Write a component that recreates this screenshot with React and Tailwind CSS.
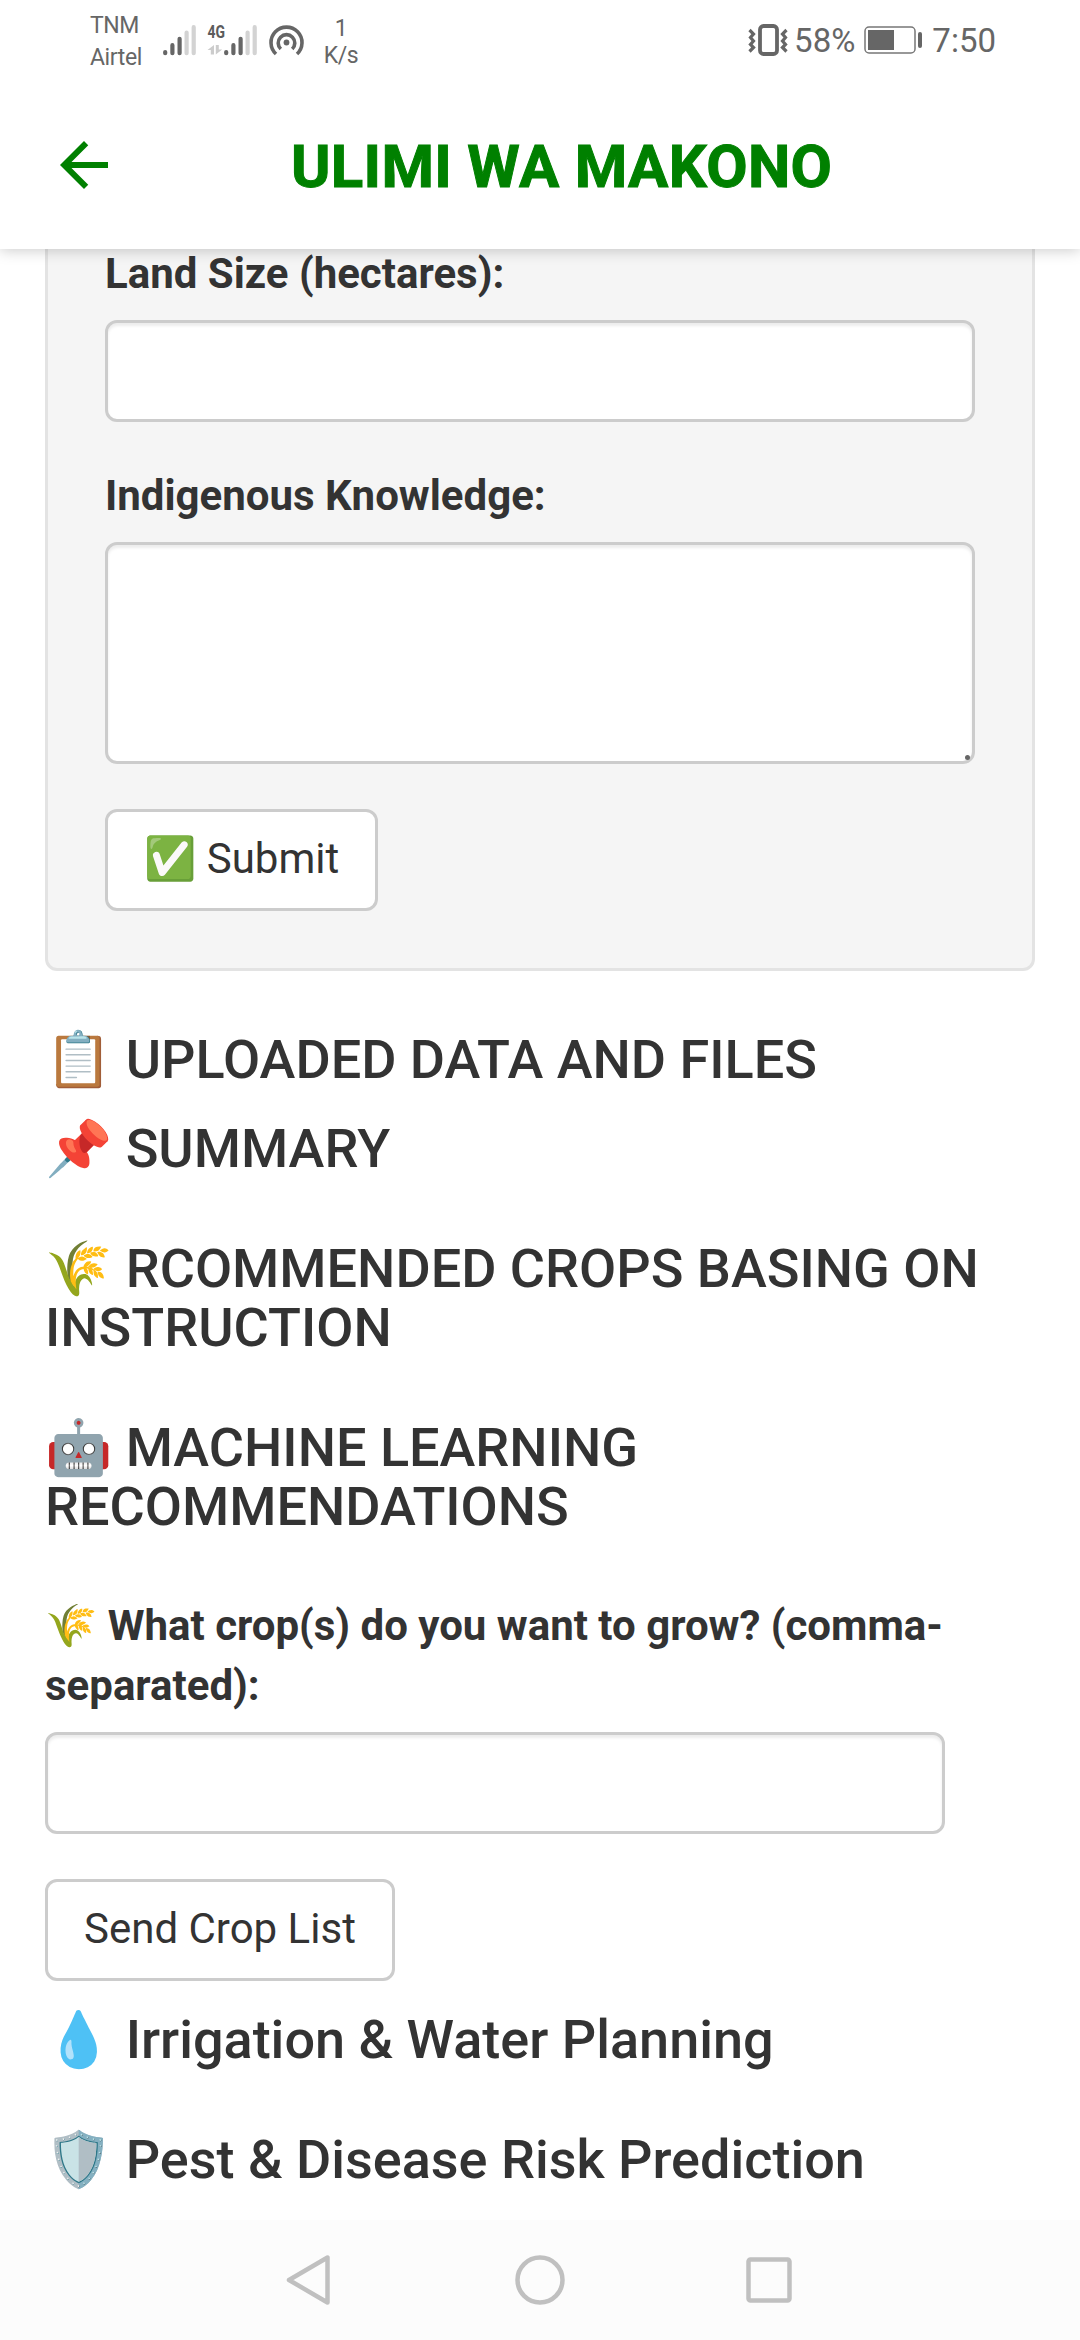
function SignalBars() {
  return (
    <svg width="33" height="31" viewBox="0 0 33 31" className="shrink-0">
      <g strokeWidth="4.2" strokeLinecap="round" fill="none">
        <path stroke="#666" d="M2.2 27v1.2M9.4 20.2v8M16.6 13.8v14.4" />
        <path stroke="#d3d3d3" d="M23.6 7.500v20.700M30.700 2.200v26" />
      </g>
    </svg>
  );
}

function StatusBar() {
  return (
    <div className="flex h-[83px] shrink-0 items-start justify-between pl-[90px] pr-[84px] text-[#666]">
      <div className="flex">
        <div className="w-[73px] pt-[10px] text-[23px] leading-[32px] tracking-[-0.4px]">
          <div>TNM</div>
          <div>Airtel</div>
        </div>
        <div className="pt-[25px]">
          <SignalBars />
        </div>
        <svg width="34" height="40" viewBox="0 0 34 40" className="-mr-[6px] mt-[20px]">
          <text x="11.500" y="18.300" fontSize="18.500" fontWeight="700" fill="#5c5c5c" textLength="17.500" lengthAdjust="spacingAndGlyphs">4G</text>
          <g fill="#ccc">
            <path d="M18 25v9.500h-3.200v-4.500h-3.300z" />
            <path d="M19.800 25h3v4.500h3.400l-6.400 5z" />
          </g>
        </svg>
        <div className="pt-[25px]">
          <SignalBars />
        </div>
        <svg width="36" height="32" viewBox="0 0 36 32" className="ml-[12px] mt-[25px]" fill="none" stroke="#666" strokeWidth="3.600">
          <path d="M7 29A15.500 15.500 0 1 1 28 29" />
          <path d="M11.800 24A8.300 8.300 0 1 1 23.200 24" />
          <circle cx="17.500" cy="17.500" r="2.900" fill="#666" stroke="none" />
        </svg>
        <div className="ml-[17px] w-[38px] pt-[15px] text-center text-[23px] leading-[27px] tracking-[-0.4px]">
          <div>1</div>
          <div>K/s</div>
        </div>
      </div>
      <div className="flex h-[80px] items-center text-[33px] leading-[40px]">
        <svg width="40" height="32" viewBox="0 0 40 32" fill="none" stroke="#666">
          <rect x="12" y="2" width="17" height="28" rx="3.500" strokeWidth="3.800" />
          <path strokeWidth="3.200" d="M1.500 6l4 4-3 3.500 3 3.500-3 3.500 3 3-4 4M38.500 6l-4 4 3 3.500-3 3.500 3 3.500-3 3 4 4" />
        </svg>
        <span className="ml-[6px] pt-[2px]">58%</span>
        <svg width="60" height="30" viewBox="0 0 60 30" className="ml-[9px]">
          <rect x="1" y="2" width="50" height="26" rx="4" fill="none" stroke="#777" strokeWidth="1.500" />
          <rect x="4" y="5" width="26" height="20" fill="#666" />
          <rect x="54" y="7" width="4" height="16" rx="2" fill="#666" />
        </svg>
        <span className="ml-[8px] pt-[2px]">7:50</span>
      </div>
    </div>
  );
}

function Header() {
  return (
    <header className="relative z-10 flex h-[249px] shrink-0 flex-col bg-white shadow-[0_1px_14px_rgba(0,0,0,0.22)]">
      <StatusBar />
      <div className="flex h-[164px] items-center pl-[48px]">
        <svg width="72" height="72" viewBox="0 0 24 24" fill="#008000">
          <path d="M20 11H7.830l5.590-5.590L12 4l-8 8 8 8 1.410-1.410L7.830 13H20v-2z" />
        </svg>
        <h1 className="ml-[171px] whitespace-nowrap pt-[4px] text-[60px] font-bold leading-[72px] tracking-[0.3px] text-[#008000] [-webkit-text-stroke:1px_#008000]">ULIMI WA MAKONO</h1>
      </div>
    </header>
  );
}

const control =
  "block w-full rounded-[12px] border-[3px] border-[#ccc] bg-white px-[36px] py-[18px] shadow-[inset_0_3px_3px_rgba(0,0,0,0.075)] outline-none";
const button =
  "block h-[102px] rounded-[12px] border-[3px] border-[#ccc] bg-white px-[36px] text-[42px] leading-[60px] whitespace-nowrap";

function Heading({ icon, children }) {
  return (
    <h4 className="text-[54px] font-medium leading-[59.4px]">
      {icon} {children}
    </h4>
  );
}

function NavBar() {
  return (
    <nav className="relative z-10 flex h-[120px] shrink-0 items-center justify-center gap-[179px] bg-[#fcfcfc]">
      <svg width="50" height="60" viewBox="0 0 50 60" fill="none" stroke="#c0c0c0" strokeWidth="4.500" strokeLinejoin="round">
        <path d="M41.500 7.500v45L3 30z" />
      </svg>
      <svg width="50" height="50" viewBox="0 0 50 50" fill="none" stroke="#c0c0c0" strokeWidth="4.500">
        <circle cx="25" cy="25" r="22.500" />
      </svg>
      <svg width="50" height="50" viewBox="0 0 50 50" fill="none" stroke="#c0c0c0" strokeWidth="4.500">
        <rect x="4.500" y="4.500" width="41" height="41" rx="2" />
      </svg>
    </nav>
  );
}

export default function App() {
  return (
    <div className="flex h-[2340px] w-[1080px] flex-col overflow-hidden bg-white font-['Roboto','Noto_Color_Emoji',sans-serif] text-[42px] leading-[60px] text-[#333]">
      <Header />
      <main className="flex-1 overflow-hidden px-[45px]">
        <form className="-mt-[12px] rounded-b-[12px] border-[3px] border-[#e3e3e3] bg-[#f5f5f5] px-[57px] pb-[57px] pt-[4px]">
          <label className="mb-[16px] block font-bold">Land Size (hectares):</label>
          <input className={`${control} h-[102px]`} />
          <label className="mb-[16px] mt-[44px] block font-bold">Indigenous Knowledge:</label>
          <div className="relative">
            <textarea className={`${control} h-[222px] resize-none`} />
            <span className="absolute bottom-[4px] right-[5px] size-[5px] rounded-full bg-[#666]" />
          </div>
          <button type="button" className={`${button} mt-[45px] pb-[2px]`}>✅ Submit</button>
        </form>
        <section className="mt-[59px]">
          <Heading icon="📋">UPLOADED DATA AND FILES</Heading>
          <div className="mt-[30px] flex flex-col gap-[60px]">
            <Heading icon="📌">SUMMARY</Heading>
            <Heading icon="🌾">RCOMMENDED CROPS BASING ON INSTRUCTION</Heading>
            <Heading icon="🤖">MACHINE LEARNING RECOMMENDATIONS</Heading>
          </div>
        </section>
        <section className="mt-[60px]">
          <label className="mb-[16px] block font-bold">🌾 What crop(s) do you want to grow? (comma-separated):</label>
          <div className="w-[900px]">
            <input className={`${control} h-[102px]`} />
          </div>
          <button type="button" className={`${button} mt-[45px] pb-[2px]`}>Send Crop List</button>
        </section>
        <section className="mt-[29px] flex flex-col gap-[60px]">
          <Heading icon="💧">Irrigation &amp; Water Planning</Heading>
          <Heading icon="🛡️">Pest &amp; Disease Risk Prediction</Heading>
        </section>
      </main>
      <NavBar />
    </div>
  );
}
